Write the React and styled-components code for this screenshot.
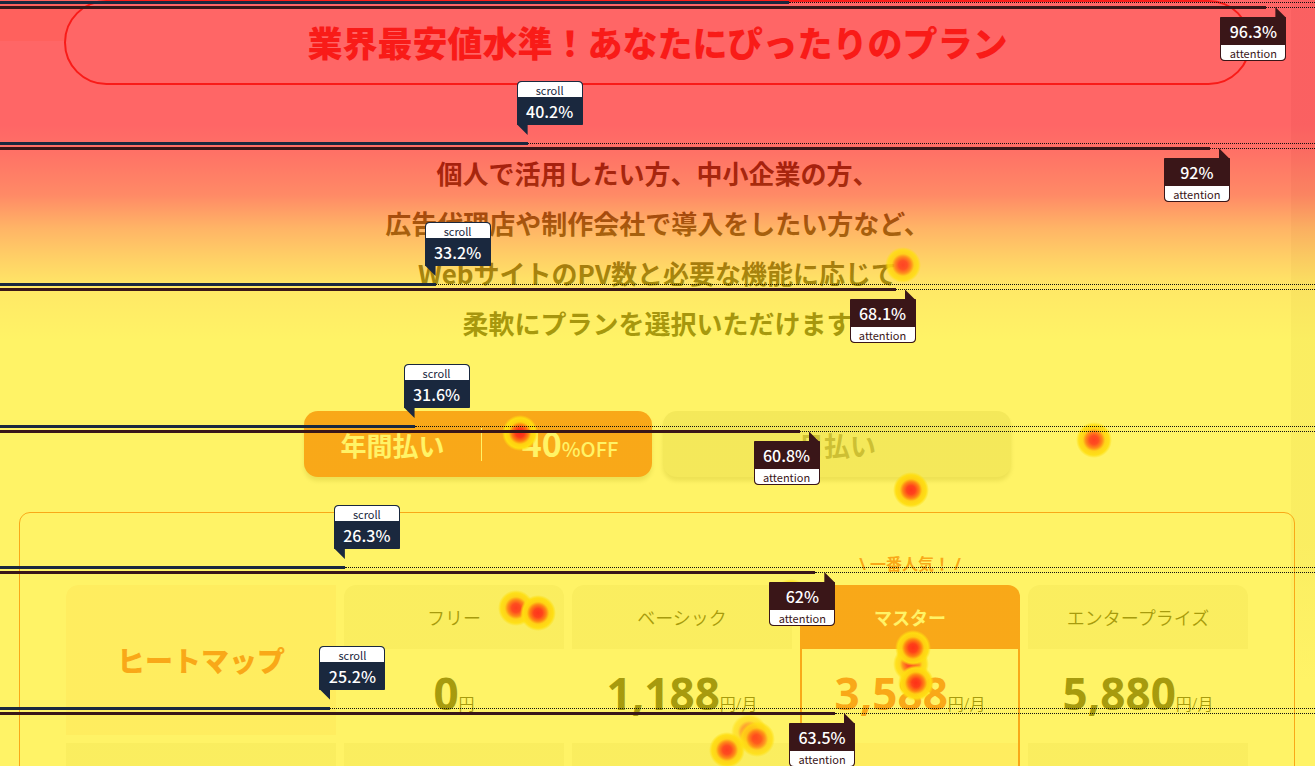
import React from 'react';
import styled, { createGlobalStyle, css } from 'styled-components';

const accent = '#f0443c';
const ink = '#222222';
const scrollColor = '#1a283e';
const attentionColor = '#3a1618';

const GlobalStyle = createGlobalStyle`
  * {
    box-sizing: border-box;
  }
  body {
    margin: 0;
    font-family: 'Noto Sans', 'Noto Sans CJK JP', sans-serif;
    color: ${ink};
  }
`;

const Page = styled.div`
  position: relative;
  height: 100vh;
  overflow: hidden;
  background: linear-gradient(#fff2e8, #fff2e8) left top / 100px 41px no-repeat,
    linear-gradient(#f3f1f3 80%, #ffffff) right top / 24px 680px no-repeat,
    #ffffff;
`;

const Title = styled.h1`
  margin: 0 64px;
  height: 85px;
  border: 2px solid ${accent};
  border-radius: 43px;
  background: #ffffff;
  color: ${accent};
  font-family: 'Noto Sans CJK JP', sans-serif;
  font-size: 35px;
  font-weight: 900;
  line-height: 80px;
  text-align: center;
`;

const Lead = styled.p`
  margin: 63px 0;
  font-family: 'Noto Sans CJK JP', sans-serif;
  font-size: 26px;
  font-weight: 700;
  line-height: 50px;
  text-align: center;
`;

const Payments = styled.div`
  display: flex;
  justify-content: center;
  gap: 11px;
`;

const PaymentButton = styled.button`
  display: flex;
  align-items: center;
  width: 348px;
  height: 66px;
  padding: 0;
  border: 0;
  border-radius: 14px;
  background: #e4e4e0;
  box-shadow: 0 4px 4px rgba(0, 0, 0, 0.18);
  color: #827e80;
  font-family: 'Noto Sans CJK JP', sans-serif;
  font-size: 26px;
  font-weight: 700;
  ${(props) =>
    props.$active &&
    css`
      background: ${accent};
      color: #ffffff;
    `}
`;

const PaymentHalf = styled.span`
  flex: 1;
  line-height: 33px;
`;

const Discount = styled(PaymentHalf)`
  flex: 0 0 171px;
  height: 33px;
  padding-left: 6px;
  border-left: 1px solid #ffffff;
  font-size: 34px;
  line-height: 30px;
  small {
    font-size: 20px;
    font-weight: 500;
    line-height: 20px;
  }
`;

const Card = styled.section`
  margin: 35px 20px 0 19px;
  padding: 72px 38px;
  border: 1px solid ${accent};
  border-radius: 11px;
`;

const PlanTable = styled.table`
  width: 100%;
  table-layout: fixed;
  border-collapse: separate;
  border-spacing: 8px 0;
`;

const FeatureCol = styled.col`
  width: 270px;
`;

const masterSides = css`
  border-left: 2px solid ${accent};
  border-right: 2px solid ${accent};
`;

const Feature = styled.th`
  padding: 0;
  border-bottom: 8px solid transparent;
  border-radius: 12px 0 0 0;
  background: #fff0ee;
  background-clip: padding-box;
  color: ${accent};
  font-size: 28px;
  font-weight: 900;
`;

const PlanName = styled.th`
  position: relative;
  height: 64px;
  padding: 0;
  border-radius: 12px 12px 0 0;
  background: #f3f1ee;
  font-size: 18px;
  font-weight: 350;
  ${(props) =>
    props.$master &&
    css`
      background: ${accent};
      color: #ffffff;
      font-weight: 700;
    `}
`;

const Popular = styled.span`
  position: absolute;
  left: 0;
  right: 0;
  bottom: 100%;
  padding-bottom: 9px;
  color: ${accent};
  font-size: 16px;
  font-weight: 700;
  line-height: 24px;
`;

const Price = styled.td`
  height: 94px;
  padding: 0;
  font-size: 44px;
  font-weight: 700;
  line-height: 88px;
  text-align: center;
  vertical-align: top;
  ${(props) =>
    props.$master &&
    css`
      ${masterSides}
      color: ${accent};
    `}
  small {
    color: ${ink};
    font-size: 16px;
    font-weight: 350;
    line-height: 16px;
  }
`;

const DetailCell = styled.td`
  height: 64px;
  background: #f3f1ee;
  ${(props) =>
    props.$master &&
    css`
      ${masterSides}
      background: #fff0ee;
    `}
`;

const HeatLayer = styled.div`
  position: absolute;
  inset: 0;
  opacity: 0.6;
  pointer-events: none;
  background: linear-gradient(
    #ff0000 125px,
    #ff1100 150px,
    #ff3c00 195px,
    #ff8200 228px,
    #ffac00 255px,
    #ffd900 288px,
    #ffeb00 340px
  );
`;

const Click = styled.span`
  position: absolute;
  left: ${(props) => props.$x}px;
  top: ${(props) => props.$y}px;
  width: 36px;
  height: 36px;
  transform: translate(-50%, -50%);
  border-radius: 50%;
  opacity: ${(props) => props.$strength};
  background: radial-gradient(
    closest-side,
    #ff2a18 0,
    #ff3a18 24%,
    #ff8010 46%,
    #ffd010 62%,
    #ffde10 84%,
    rgba(255, 228, 16, 0) 100%
  );
`;

const Folds = styled.div`
  position: absolute;
  inset: 0;
  display: grid;
  grid-template-rows: 141px 141px 142px 141px 141px 141px;
  padding-top: 1px;
  overflow: hidden;
  pointer-events: none;
`;

const Fold = styled.div`
  display: flex;
  flex-direction: column;
  gap: 2px;
`;

const Track = styled.div`
  position: relative;
  display: flex;
  align-items: center;
  height: 3px;
`;

const Bar = styled.div`
  position: relative;
  height: 3px;
  background: ${(props) => props.$color};
`;

const Dots = styled.div`
  flex: 1;
  border-top: 1px dotted #111111;
`;

const Tag = styled.div`
  position: absolute;
  z-index: 1;
  width: 66px;
  height: 44px;
  display: flex;
  flex-direction: column;
  border: 1px solid ${(props) => props.$color};
  background: ${(props) => props.$color};
  color: #ffffff;
  font-family: 'Noto Sans CJK JP', sans-serif;
  text-align: center;
  &::after {
    content: '';
    position: absolute;
    width: 11px;
    height: 11px;
    background: ${(props) => props.$color};
  }
`;

const ScrollTag = styled(Tag)`
  right: -55px;
  bottom: 20px;
  border-radius: 4px 4px 0 0;
  &::after {
    left: -1px;
    top: 100%;
    clip-path: polygon(0 0, 100% 0, 100% 100%);
  }
`;

const AttentionTag = styled(Tag)`
  right: -20px;
  top: 11px;
  flex-direction: column-reverse;
  border-radius: 0 0 4px 4px;
  &::after {
    right: -1px;
    bottom: 100%;
    clip-path: polygon(0 0, 100% 100%, 0 100%);
  }
`;

const TagName = styled.span`
  height: 15px;
  border-radius: inherit;
  background: #ffffff;
  color: ${(props) => props.$color};
  font-size: 11px;
  line-height: 16px;
`;

const TagValue = styled.strong`
  flex: 1;
  font-size: 16px;
  font-weight: 500;
  line-height: 28px;
`;

const plans = [
  { name: 'フリー', price: '0', unit: '円' },
  { name: 'ベーシック', price: '1,188', unit: '円/月' },
  { name: 'マスター', price: '3,588', unit: '円/月', master: true },
  { name: 'エンタープライズ', price: '5,880', unit: '円/月' },
];

const folds = [
  { scroll: 60.1, attention: 96.3, hideScrollTag: true },
  { scroll: 40.2, attention: 92 },
  { scroll: 33.2, attention: 68.1 },
  { scroll: 31.6, attention: 60.8 },
  { scroll: 26.3, attention: 62 },
  { scroll: 25.2, attention: 63.5 },
];

const clicks = [
  { x: 903, y: 265, strength: 0.85 },
  { x: 520, y: 433, strength: 1 },
  { x: 1094, y: 440, strength: 0.9 },
  { x: 911, y: 490, strength: 0.95 },
  { x: 516, y: 608, strength: 0.9 },
  { x: 538, y: 613, strength: 0.95 },
  { x: 791, y: 597, strength: 0.8 },
  { x: 911, y: 664, strength: 0.85 },
  { x: 913, y: 648, strength: 0.95 },
  { x: 916, y: 683, strength: 0.95 },
  { x: 749, y: 732, strength: 0.6 },
  { x: 757, y: 739, strength: 0.8 },
  { x: 727, y: 750, strength: 0.9 },
];

const FoldRow = ({ scroll, attention, hideScrollTag }) => (
  <Fold>
    <Track>
      <Bar $color={scrollColor} style={{ width: `calc(${scroll}% - 1px)` }}>
        {!hideScrollTag && (
          <ScrollTag $color={scrollColor}>
            <TagName $color={scrollColor}>scroll</TagName>
            <TagValue>{scroll}%</TagValue>
          </ScrollTag>
        )}
      </Bar>
      <Dots />
    </Track>
    <Track>
      <Bar $color={attentionColor} style={{ width: `${attention}%` }}>
        <AttentionTag $color={attentionColor}>
          <TagName $color={attentionColor}>attention</TagName>
          <TagValue>{attention}%</TagValue>
        </AttentionTag>
      </Bar>
      <Dots />
    </Track>
  </Fold>
);

const App = () => (
  <Page lang="ja">
    <GlobalStyle />
    <Title>業界最安値水準！あなたにぴったりのプラン</Title>
    <Lead>
      個人で活用したい方、中小企業の方、
      <br />
      広告代理店や制作会社で導入をしたい方など、
      <br />
      WebサイトのPV数と必要な機能に応じて
      <br />
      柔軟にプランを選択いただけます
    </Lead>
    <Payments>
      <PaymentButton type="button" $active>
        <PaymentHalf>年間払い</PaymentHalf>
        <Discount>
          40<small>%OFF</small>
        </Discount>
      </PaymentButton>
      <PaymentButton type="button">
        <PaymentHalf>月払い</PaymentHalf>
      </PaymentButton>
    </Payments>
    <Card>
      <PlanTable>
        <colgroup>
          <FeatureCol />
          <col span={4} />
        </colgroup>
        <thead>
          <tr>
            <Feature rowSpan={2}>ヒートマップ</Feature>
            {plans.map((plan) => (
              <PlanName key={plan.name} scope="col" $master={plan.master}>
                {plan.master && <Popular>\ 一番人気！ /</Popular>}
                {plan.name}
              </PlanName>
            ))}
          </tr>
          <tr>
            {plans.map((plan) => (
              <Price key={plan.name} $master={plan.master}>
                {plan.price}
                <small>{plan.unit}</small>
              </Price>
            ))}
          </tr>
        </thead>
        <tbody>
          <tr>
            <DetailCell />
            {plans.map((plan) => (
              <DetailCell key={plan.name} $master={plan.master} />
            ))}
          </tr>
        </tbody>
      </PlanTable>
    </Card>
    <HeatLayer />
    {clicks.map((click) => (
      <Click
        key={`${click.x}-${click.y}`}
        $x={click.x}
        $y={click.y}
        $strength={click.strength}
      />
    ))}
    <Folds>
      {folds.map((fold) => (
        <FoldRow key={fold.attention} {...fold} />
      ))}
    </Folds>
  </Page>
);

export default App;
